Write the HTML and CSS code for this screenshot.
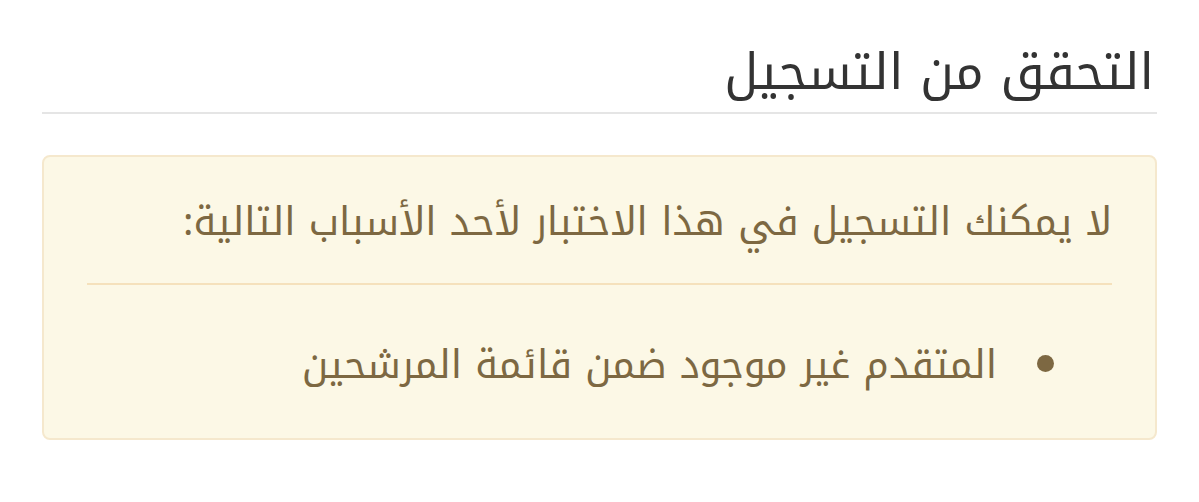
FILE: index.html
```html
<!DOCTYPE html>
<html lang="ar" dir="rtl">
<head>
  <meta charset="UTF-8" />
  <meta name="viewport" content="width=device-width, initial-scale=1.0"/>
  <title>التحقق من التسجيل</title>
  <link rel="stylesheet" href="styles.css">
</head>
<body>
  <div class="page">
    <h1 class="page-title">التحقق من التسجيل</h1>
    <div class="alert">
      <p class="alert-lead">لا يمكنك التسجيل في هذا الاختبار لأحد الأسباب التالية:</p>
      <hr class="alert-rule">
      <ul class="reasons">
        <li>المتقدم غير موجود ضمن قائمة المرشحين</li>
      </ul>
    </div>
  </div>
</body>
</html>
```

FILE: styles.css
```css
* {
  margin: 0;
  padding: 0;
  box-sizing: border-box;
  font-family: 'Noto Kufi Arabic', 'DejaVu Sans', sans-serif;
}
body {
  background: #fff;
  color: #333;
}
.page {
  padding: 41px 42px;
}
.page-title {
  font-size: 50px;
  font-weight: normal;
  line-height: 64px;
  color: #333;
  padding: 0 3px 7px;
  border-bottom: 2px solid #e5e5e5;
}
.alert {
  margin-top: 41px;
  padding: 37px 43px 44px;
  background: #fcf8e6;
  border: 2px solid #f5e8cd;
  border-radius: 8px;
  color: #7d6842;
  font-size: 39px;
  line-height: 57px;
}
.alert-rule {
  border: 0;
  border-top: 2px solid #f5e1bc;
  margin: 32px 0 52px;
}
.reasons {
  list-style: none;
  padding-right: 58px;
}
.reasons li {
  display: flex;
  align-items: center;
  gap: 40px;
}
.reasons li::before {
  content: "";
  flex: none;
  width: 17px;
  height: 17px;
  margin-bottom: 4px;
  border-radius: 50%;
  background: #7d6842;
}
```
